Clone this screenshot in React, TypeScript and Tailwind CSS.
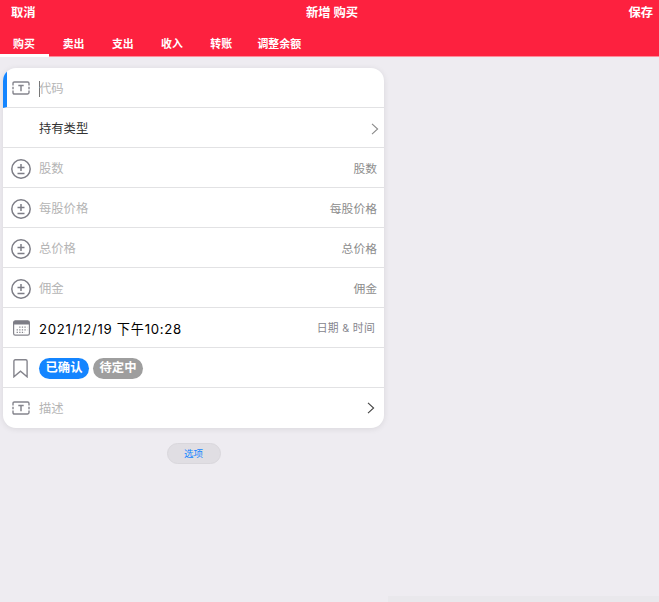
import React from "react";
import clsx from "clsx";

const TABS = ["购买", "卖出", "支出", "收入", "转账", "调整余额"];

const TextIcon: React.FC = () => (
  <svg width="18" height="14" viewBox="0 0 18 14" fill="none" className="-mt-0.5">
    <path
      d="M1 4.4V2.4Q1 1 2.4 1H15.6Q17 1 17 2.4V4.4M17 9.6v2q0 1.4-1.4 1.4H2.4Q1 13 1 11.6V9.6M1 5.8v2.4M17 5.8v2.4"
      stroke="#85858d"
      strokeWidth="1.4"
    />
    <path d="M6.3 4.4h5.4M9 4.4v5.8" stroke="#85858d" strokeWidth="1.5" />
  </svg>
);

const AmountIcon: React.FC = () => (
  <svg width="20" height="20" viewBox="0 0 20 20" fill="none" stroke="#7d7d86">
    <circle cx="10" cy="10" r="9.2" strokeWidth="1.5" />
    <path d="M6.5 8.5h7M10 5v7M6.5 14.5h7" strokeWidth="1.5" />
  </svg>
);

const CalendarIcon: React.FC = () => (
  <svg width="17" height="16" viewBox="0 0 17 16" fill="none" className="-mt-px">
    <rect x=".6" y=".9" width="15.8" height="14.3" rx="1.6" stroke="#85858d" strokeWidth="1.2" />
    <path d="M.6 2.4Q.6 .7 2.2 .7h12.6q1.6 0 1.6 1.7v2H.6z" fill="#7d7d86" />
    <path
      d="M6.2 7.2h8M3.6 9.8h10.6M3.6 12.4h8"
      stroke="#85858d"
      strokeWidth="1.2"
      strokeDasharray="1.3 1.3"
    />
  </svg>
);

const BookmarkIcon: React.FC = () => (
  <svg width="15" height="19" viewBox="0 0 15 19" fill="none" className="mr-0.5">
    <path
      d="M.9 2.2Q.9 .8 2.3 .8h10.4q1.4 0 1.4 1.4v15.6l-6.6-5.6-6.6 5.6z"
      stroke="#85858d"
      strokeWidth="1.4"
    />
  </svg>
);

const Chevron: React.FC<{ className: string }> = ({ className }) => (
  <svg width="8" height="12" viewBox="0 0 8 12" fill="none" className={className}>
    <path d="M1 .8l5.6 5.2L1 11.2" stroke="currentColor" strokeWidth="1.1" />
  </svg>
);

interface RowProps {
  icon?: React.ReactNode;
  right?: React.ReactNode;
  active?: boolean;
  last?: boolean;
  children: React.ReactNode;
}

const Row: React.FC<RowProps> = ({ icon, right, active, last, children }) => (
  <div
    className={clsx(
      "flex h-10 items-center pr-[7px]",
      !last && "border-b border-[#e2e2e4]",
      active ? "border-l-4 border-l-[#1485ff]" : "pl-1",
    )}
  >
    <div className="flex w-7 justify-center pt-0.5">{icon}</div>
    <div className="ml-1 flex flex-1 items-center pt-0.5">{children}</div>
    {right}
  </div>
);

const Placeholder: React.FC<{ text: string }> = ({ text }) => (
  <span className="text-[12.3px] leading-4 text-[#b5b5b5]">{text}</span>
);

const AmountRow: React.FC<{ label: string }> = ({ label }) => (
  <Row
    icon={<AmountIcon />}
    right={<span className="pt-[3px] text-[11.8px] leading-4 text-[#8d8d8d]">{label}</span>}
  >
    <Placeholder text={label} />
  </Row>
);

export default function App() {
  return (
    <div className="h-[602px] w-[659px] overflow-hidden bg-[#eeecf1] font-['Inter','Noto_Sans_CJK_SC',sans-serif]">
      <header className="h-[57px] border-b border-[#ff8b99] bg-[#fd213f] text-white">
        <div className="grid h-[25px] grid-cols-3 items-center pt-0.5 pr-1.5 pl-[11px] text-[12.3px] font-bold">
          <span>取消</span>
          <span className="text-center">新增 购买</span>
          <span className="text-right">保存</span>
        </div>
        <nav className="-ml-px flex h-8 text-[10.9px] font-bold">
          {TABS.map((tab, i) => (
            <button
              key={tab}
              className={clsx(
                "flex h-8 items-center justify-center",
                i === 5 ? "w-[67px]" : "w-[49.2px]",
                i === 0 ? "w-[50px] border-b-3 border-white pt-[10px]" : "pt-[7px]",
              )}
            >
              {tab}
            </button>
          ))}
        </nav>
      </header>

      <main className="flex h-[545px]">
        <div className="w-[388px] pt-[11px] pl-[3px]">
          <div className="w-[381px] overflow-hidden rounded-[13px] bg-white shadow-[0_1px_6px_rgba(0,0,0,0.09)]">
            <Row active icon={<TextIcon />}>
              <span className="-mr-px h-4 w-px bg-[#777]" />
              <Placeholder text="代码" />
            </Row>
            <Row right={<Chevron className="mt-0.5 -mr-0.5 text-[#8a8a8a]" />}>
              <span className="text-[12.3px] leading-4 text-[#333]">持有类型</span>
            </Row>
            <AmountRow label="股数" />
            <AmountRow label="每股价格" />
            <AmountRow label="总价格" />
            <AmountRow label="佣金" />
            <Row
              icon={<CalendarIcon />}
              right={
                <span className="mr-0.5 pt-[3px] text-[10.8px] leading-4 tracking-[0.3px] text-[#85858d]">
                  日期 &amp; 时间
                </span>
              }
            >
              <span className="text-[13.2px] leading-4 tracking-[0.72px] text-black">
                2021/12/19 下午10:28
              </span>
            </Row>
            <Row icon={<BookmarkIcon />}>
              <div className="flex gap-1 text-[12.3px] font-bold text-white">
                <span className="flex h-[21px] w-[50px] items-center justify-center rounded-full bg-[#1485ff]">
                  已确认
                </span>
                <span className="flex h-[21px] w-[50px] items-center justify-center rounded-full bg-[#9e9e9e]">
                  待定中
                </span>
              </div>
            </Row>
            <Row last icon={<TextIcon />} right={<Chevron className="mr-0.5 text-[#444]" />}>
              <Placeholder text="描述" />
            </Row>
          </div>
          <div className="mt-[15px] flex w-[381px] justify-center">
            <button className="h-[21px] w-[54px] rounded-full border border-[#d9d7dc] bg-[#e0dee3] text-[9.5px] leading-[19px] text-[#1485ff]">
              选项
            </button>
          </div>
        </div>
        <aside className="flex flex-1 flex-col justify-end">
          <div className="h-1.5 bg-[#e9e8ec]" />
        </aside>
      </main>
    </div>
  );
}
